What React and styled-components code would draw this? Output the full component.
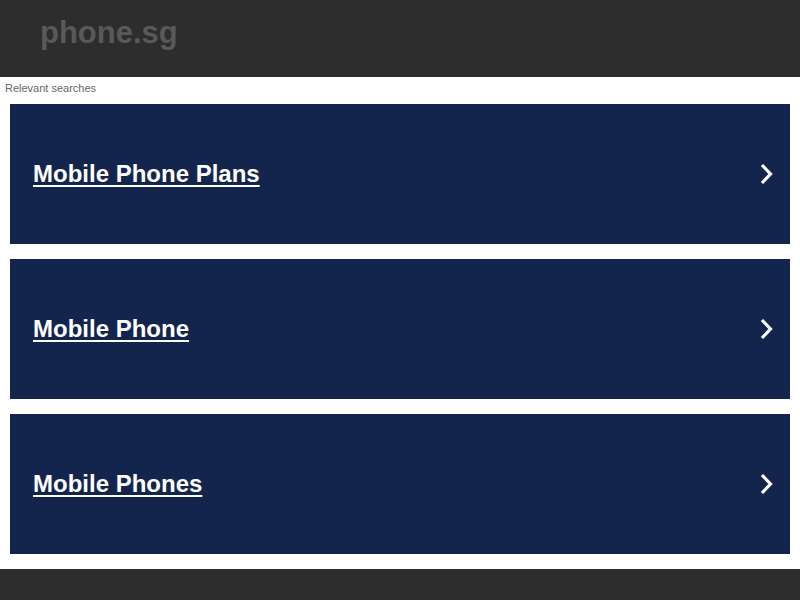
import React from "react";
import styled, { createGlobalStyle } from "styled-components";

const Global = createGlobalStyle`
  html, body { margin: 0; padding: 0; background: #ffffff; }
  body { font-family: "Liberation Sans", Arial, sans-serif; }
`;

const Page = styled.div`
  display: flex;
  flex-direction: column;
  min-height: 600px;
`;

const Header = styled.header`
  height: 77px;
  background: #2d2d2d;
  display: flex;
  align-items: flex-start;
  padding: 0 40px;
  box-sizing: border-box;
`;

const Domain = styled.h1`
  margin: 0;
  padding-top: 14px;
  font-size: 31px;
  line-height: 38px;
  font-weight: bold;
  color: #595959;
`;

const Label = styled.div`
  font-size: 11px;
  line-height: 13px;
  color: #666666;
  padding: 5px 5px 0;
  height: 22px;
  box-sizing: border-box;
`;

const List = styled.div`
  display: flex;
  flex-direction: column;
  gap: 15px;
  padding: 5px 10px 15px;
`;

const Card = styled.a`
  display: flex;
  align-items: center;
  justify-content: space-between;
  height: 140px;
  background: #13254d;
  color: #ffffff;
  padding: 0 15px 0 23px;
  box-sizing: border-box;
  text-decoration: none;
`;

const Title = styled.span`
  font-size: 24px;
  font-weight: bold;
  text-decoration: underline;
  text-underline-offset: 3px;
  text-decoration-thickness: 2px;
`;

const Footer = styled.footer`
  flex: 1;
  background: #2d2d2d;
  min-height: 31px;
`;

const Chevron = () => (
  <svg width="20" height="22" viewBox="0 0 20 22" aria-hidden="true">
    <path d="M7 2 L15.5 11 L7 20" fill="none" stroke="#ffffff" strokeWidth="3.2" strokeLinecap="butt" strokeLinejoin="miter" />
  </svg>
);

const items = ["Mobile Phone Plans", "Mobile Phone", "Mobile Phones"];

export default function App() {
  return (
    <Page>
      <Global />
      <Header>
        <Domain>phone.sg</Domain>
      </Header>
      <Label>Relevant searches</Label>
      <List>
        {items.map((t) => (
          <Card key={t} href="#">
            <Title>{t}</Title>
            <Chevron />
          </Card>
        ))}
      </List>
      <Footer />
    </Page>
  );
}
